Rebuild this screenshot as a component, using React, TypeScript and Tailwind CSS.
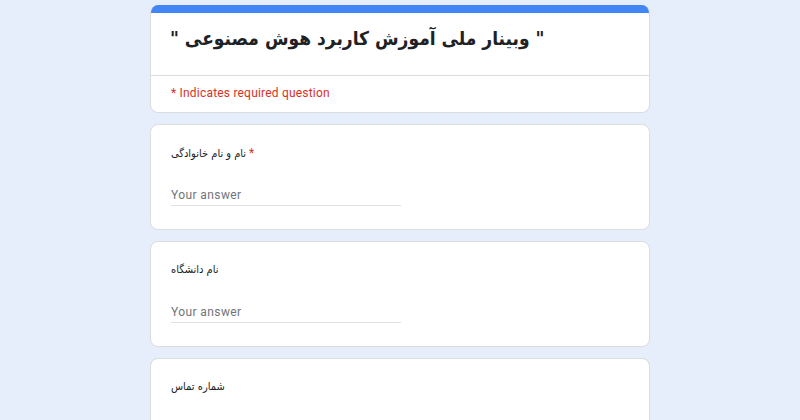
const font = { fontFamily: 'Roboto, "DejaVu Sans", sans-serif' };
const persian = { fontFamily: '"DejaVu Sans Condensed", "DejaVu Sans", sans-serif' };

type QuestionProps = {
  label: string;
  required?: boolean;
};

const Question = ({ label, required }: QuestionProps) => (
  <div className="bg-white rounded-lg border border-[#dadce0] px-5 pt-[18px] pb-[23px]">
    <div className="h-5 text-[11px] leading-[20px] text-[#202124]" style={persian}>
      {label}
      {required && (
        <span className="text-[#d93025] text-[12px] leading-[20px]" style={font}>
          {" "}*
        </span>
      )}
    </div>
    <div className="mt-[24px] w-[230px] border-b border-[#e0e0e0] pb-[2px] text-[12px] leading-[16px] tracking-[0.4px] text-[#70757a]">
      Your answer
    </div>
  </div>
);

export default function App() {
  return (
    <div className="h-[420px] overflow-hidden bg-[#e6edfb]" style={font}>
      <div className="w-[500px] mx-auto pt-[5px] flex flex-col gap-[11px]">
        <div className="bg-white rounded-lg border border-[#dadce0] border-t-0 overflow-hidden">
          <div className="h-[8px] bg-[#4285f4]" />
          <div className="px-5 pt-[7px] pb-[19px] border-b border-[#dadce0]">
            <h1
              className="whitespace-nowrap text-[19px] leading-[36px] font-bold text-[#202124] -ml-[1px]"
              style={persian}
            >
              " وبینار ملی آموزش کاربرد هوش مصنوعی "
            </h1>
          </div>
          <div className="px-5 pt-[9px] pb-[11px] text-[12px] leading-[16px] text-[#d93025] tracking-[0.2px]">
            * Indicates required question
          </div>
        </div>
        <Question label="نام و نام خانوادگی" required />
        <Question label="نام دانشگاه" />
        <Question label="شماره تماس" />
      </div>
    </div>
  );
}
